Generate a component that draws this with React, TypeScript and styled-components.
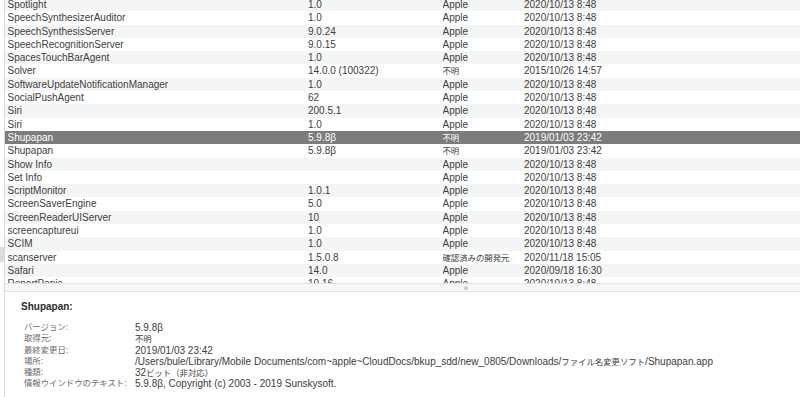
import { Fragment, type ReactNode } from "react";
import styled, { createGlobalStyle } from "styled-components";

const GlobalStyle = createGlobalStyle`
  html, body {
    margin: 0;
    padding: 0;
    background: #ffffff;
    overflow: hidden;
  }
  body {
    font-family: "Liberation Sans", "Noto Sans CJK JP", sans-serif;
    -webkit-font-smoothing: antialiased;
  }
`;

const ROW_H = 13.3;

// Japanese glyphs are set a little smaller, as the system font does
const Jp = styled.span`
  font-family: "Noto Sans CJK JP", sans-serif;
  font-size: 8.4px;
`;

type App = {
  name: string;
  version: string;
  source: ReactNode;
  modified: string;
};

const APPLE = "Apple";
const UNKNOWN = <Jp>不明</Jp>;

const APPS: App[] = [
  { name: "Spotlight", version: "1.0", source: APPLE, modified: "2020/10/13 8:48" },
  { name: "SpeechSynthesizerAuditor", version: "1.0", source: APPLE, modified: "2020/10/13 8:48" },
  { name: "SpeechSynthesisServer", version: "9.0.24", source: APPLE, modified: "2020/10/13 8:48" },
  { name: "SpeechRecognitionServer", version: "9.0.15", source: APPLE, modified: "2020/10/13 8:48" },
  { name: "SpacesTouchBarAgent", version: "1.0", source: APPLE, modified: "2020/10/13 8:48" },
  { name: "Solver", version: "14.0.0 (100322)", source: UNKNOWN, modified: "2015/10/26 14:57" },
  { name: "SoftwareUpdateNotificationManager", version: "1.0", source: APPLE, modified: "2020/10/13 8:48" },
  { name: "SocialPushAgent", version: "62", source: APPLE, modified: "2020/10/13 8:48" },
  { name: "Siri", version: "200.5.1", source: APPLE, modified: "2020/10/13 8:48" },
  { name: "Siri", version: "1.0", source: APPLE, modified: "2020/10/13 8:48" },
  { name: "Shupapan", version: "5.9.8β", source: UNKNOWN, modified: "2019/01/03 23:42" },
  { name: "Shupapan", version: "5.9.8β", source: UNKNOWN, modified: "2019/01/03 23:42" },
  { name: "Show Info", version: "", source: APPLE, modified: "2020/10/13 8:48" },
  { name: "Set Info", version: "", source: APPLE, modified: "2020/10/13 8:48" },
  { name: "ScriptMonitor", version: "1.0.1", source: APPLE, modified: "2020/10/13 8:48" },
  { name: "ScreenSaverEngine", version: "5.0", source: APPLE, modified: "2020/10/13 8:48" },
  { name: "ScreenReaderUIServer", version: "10", source: APPLE, modified: "2020/10/13 8:48" },
  { name: "screencaptureui", version: "1.0", source: APPLE, modified: "2020/10/13 8:48" },
  { name: "SCIM", version: "1.0", source: APPLE, modified: "2020/10/13 8:48" },
  { name: "scanserver", version: "1.5.0.8", source: <Jp>確認済みの開発元</Jp>, modified: "2020/11/18 15:05" },
  { name: "Safari", version: "14.0", source: APPLE, modified: "2020/09/18 16:30" },
  { name: "ReportPanic", version: "10.16", source: APPLE, modified: "2020/10/13 8:48" },
];

const SELECTED = 10;

const DETAILS: [string, ReactNode][] = [
  ["バージョン:", "5.9.8β"],
  ["取得元:", UNKNOWN],
  ["最終変更日:", "2019/01/03 23:42"],
  [
    "場所:",
    <>
      /Users/bule/Library/Mobile Documents/com~apple~CloudDocs/bkup_sdd/new_0805/Downloads/
      <Jp>ファイル名変更ソフト</Jp>/Shupapan.app
    </>,
  ],
  ["種類:", <>32<Jp>ビット（非対応）</Jp></>],
  ["情報ウインドウのテキスト:", "5.9.8β, Copyright (c) 2003 - 2019 Sunskysoft."],
];

const Window = styled.div`
  display: flex;
  width: 800px;
  height: 397px;
  overflow: hidden;
`;

const Sidebar = styled.div`
  width: 4px;
  flex: none;
  border-right: 1px solid #d8d8d8;
  display: flex;
  flex-direction: column;
  padding-top: 247px;
`;

const SidebarHighlight = styled.div`
  height: 15px;
  background: #dcdcdc;
`;

const Main = styled.div`
  flex: 1;
  min-width: 0;
  display: flex;
  flex-direction: column;
`;

const ListPane = styled.div`
  height: 283px;
  flex: none;
  overflow: hidden;
`;

const List = styled.div`
  margin-top: -2px;
  display: flex;
  flex-direction: column;
`;

const Row = styled.div<{ $stripe: boolean; $selected: boolean }>`
  height: ${ROW_H}px;
  flex: none;
  display: grid;
  grid-template-columns: 300.5px 134.5px 81.5px 1fr;
  align-items: center;
  padding-left: 2.5px;
  font-size: 10px;
  white-space: nowrap;
  color: ${(p) => (p.$selected ? "#ffffff" : "#404040")};
  background: ${(p) =>
    p.$selected ? "#7c7c7c" : p.$stripe ? "#f4f5f5" : "#ffffff"};
`;

const Cell = styled.span`
  overflow: hidden;
  line-height: ${ROW_H}px;
`;

const Splitter = styled.div`
  height: 7px;
  flex: none;
  background: #f7f7f7;
  border-top: 1px solid #e2e2e2;
  border-bottom: 1px solid #e2e2e2;
  display: flex;
  align-items: center;
  padding-left: 459px;
`;

const Handle = styled.div`
  width: 4px;
  height: 4px;
  border-radius: 50%;
  background: #c8c8c8;
`;

const DetailPane = styled.div`
  flex: 1;
  padding: 8px 0 0 16px;
  color: #3d3d3d;
  font-size: 10px;
`;

const DetailTitle = styled.div`
  font-weight: bold;
  font-size: 10px;
  line-height: 13px;
  color: #2a2a2a;
  margin-bottom: 9px;
`;

const DetailGrid = styled.div`
  display: grid;
  grid-template-columns: 111px 1fr;
  padding-left: 3px;
  grid-auto-rows: 11.3px;
  align-items: center;
  white-space: nowrap;
`;

const Label = styled.span`
  color: #6a6a6a;
  font-size: 8.4px;
  line-height: 11.3px;
`;

const Value = styled.span`
  line-height: 11.3px;
`;

export default function App() {
  return (
    <>
      <GlobalStyle />
      <Window>
        <Sidebar>
          <SidebarHighlight />
        </Sidebar>
        <Main>
          <ListPane>
            <List>
              {APPS.map((a, i) => (
                <Row key={i} $stripe={i % 2 === 0} $selected={i === SELECTED}>
                  <Cell>{a.name}</Cell>
                  <Cell>{a.version}</Cell>
                  <Cell>{a.source}</Cell>
                  <Cell>{a.modified}</Cell>
                </Row>
              ))}
            </List>
          </ListPane>
          <Splitter>
            <Handle />
          </Splitter>
          <DetailPane>
            <DetailTitle>Shupapan:</DetailTitle>
            <DetailGrid>
              {DETAILS.map(([k, v]) => (
                <Fragment key={k}>
                  <Label>{k}</Label>
                  <Value>{v}</Value>
                </Fragment>
              ))}
            </DetailGrid>
          </DetailPane>
        </Main>
      </Window>
    </>
  );
}
